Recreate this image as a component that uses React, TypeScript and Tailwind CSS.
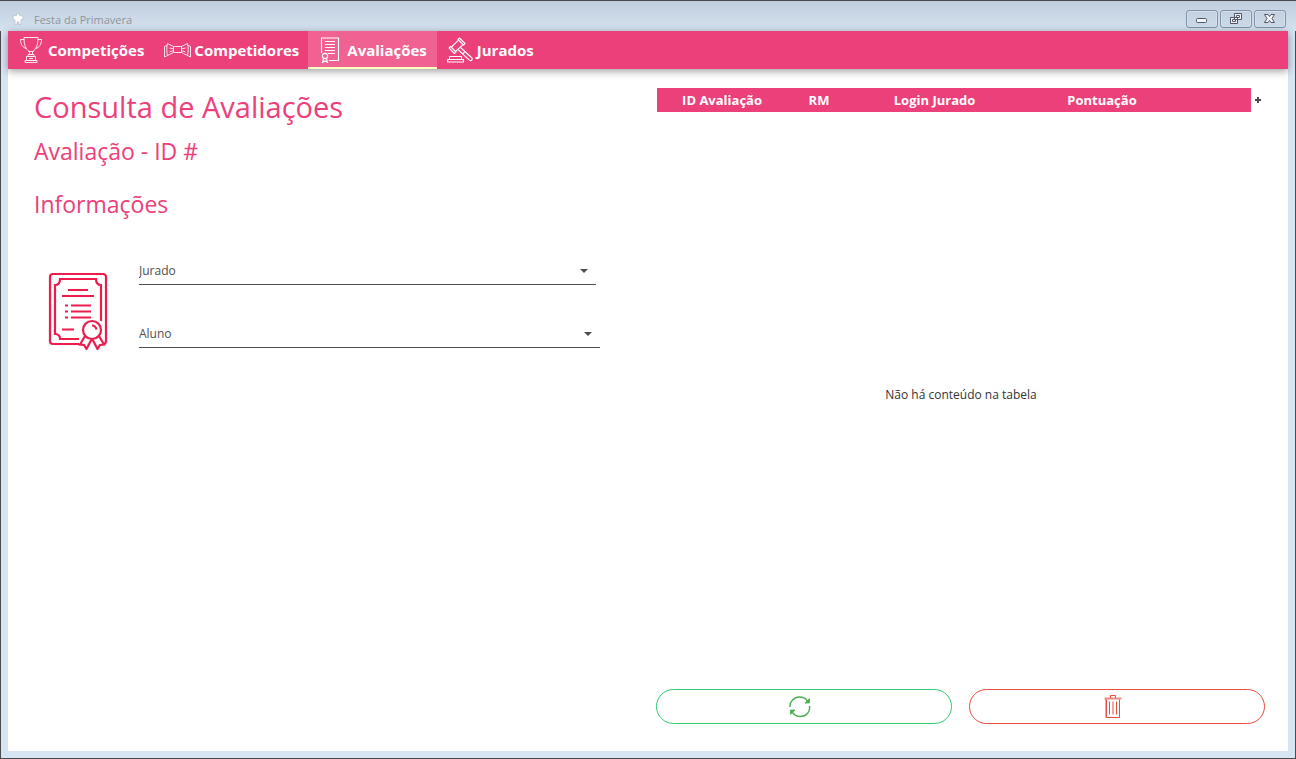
import type { ReactNode } from "react";

const textFont = "font-['Open_Sans','Noto_Sans',sans-serif]";

function TrophyIcon() {
  return (
    <svg width="24" height="28" viewBox="0 0 24 28" fill="none" stroke="#fff" strokeOpacity="0.85" aria-hidden="true">
      <path d="M5 1.500h14c0 7-1.500 12-5.500 14v3h-3v-3C6.500 13.500 5 8.500 5 1.500z" />
      <path d="M5 3.500H1.500c0 5 2.500 8 5.500 9M19 3.500h3.500c0 5-2.500 8-5.500 9" />
      <path d="M9.500 15.500h5M9 18.500h6v2H9zM7.500 20.500h9v4h-9zM6 24.500h12v2H6zM10 22.500h4" />
    </svg>
  );
}

function BowTieIcon() {
  return (
    <svg width="27" height="16" viewBox="0 0 27 16" fill="none" stroke="#fff" strokeOpacity="0.85" strokeLinejoin="round" aria-hidden="true">
      <path d="M9.500 4.500h8v6h-8zM9.500 4.500L3.500 1.500c-1 4-1 8 0 12l6-3M17.500 4.500l6-3c1 4 1 8 0 12l-6-3" />
      <path d="M3 3.500L.5 4.500v10.500l3-1.500M24 3.500l2.500 1v10.500l-3-1.500M5.500 6l4 .8M5.500 10l4-1.500M21.500 6l-4 .8M21.500 10l-4-1.500" />
    </svg>
  );
}

function SheetIcon() {
  return (
    <svg width="20" height="26" viewBox="0 0 20 26" fill="none" stroke="#fff" strokeWidth="1.1" aria-hidden="true">
      <path d="M1.500 16V1h17v22.500H9" />
      <path d="M5 4.500h10M5 7.500h10M5 10.500h10M5 13.500h10M8 16.500h7" />
      <circle cx="5" cy="19" r="2.600" />
      <path d="M3.500 21.500L2.500 25.500 5 24l2.500 1.500-1-4" />
    </svg>
  );
}

function GavelIcon() {
  return (
    <svg width="26" height="26" viewBox="0 0 26 26" fill="none" stroke="#fff" strokeWidth="1.100" strokeLinejoin="round" aria-hidden="true">
      <path d="M12.500 1L18 6.500 16.500 8 11 2.500zM3.500 9.500L9 15l-1.500 1.500L2 11zM11.500 3.200L4.500 10M16 7.700L8.500 14.500" />
      <path d="M13.500 10.500l11 10c1 1 .8 2 .2 2.600-.7.700-1.700.700-2.600-.2L11 12.500M18 14.500l-2.500 2.500" />
      <path d="M2.500 22.500v-3h12v3M.6 22.500h15.900v2.500H.6z" />
    </svg>
  );
}

function CertificateIcon() {
  return (
    <svg className="shrink-0" width="60" height="78" viewBox="0 0 60 78" fill="none" stroke="#ed1c4d" strokeWidth="2.200" aria-hidden="true">
      <path d="M31 72H5a3 3 0 0 1-3-3V5a3 3 0 0 1 3-3h50a3 3 0 0 1 3 3v64a3 3 0 0 1-3 3" />
      <path d="M31 67H12c0-3-2-5-5-5V13c3 0 5-2 5-6h36c0 4 2 6 5 6v36" />
      <path d="M20 18h20M14 24h32M23 33.500h20M23 39.500h20M23 45.500h20M17 33.500h3M17 39.500h3M17 45.500h3M14 57.500h12" />
      <circle cx="44" cy="58" r="9" />
      <path d="M44 53.500c2.500 0 4 2 4.500 4" />
      <path d="M37 64l-5 8.500 4 .5 2.500 4 5-9.500M51 64l5 8.500-4 .5-2.500 4-5-9.500" />
    </svg>
  );
}

function RefreshIcon() {
  return (
    <svg width="22" height="22" viewBox="0 0 22 22" fill="none" stroke="#4caf50" strokeWidth="1.400" aria-hidden="true">
      <path d="M1 11C.5 5.500 5 1 10.500 1c3.500 0 6.500 1.500 8.500 4.500M20.500 10c1 6-3.500 10.500-9 10.500-3.500 0-6.500-1.500-8.500-4.500" />
      <path d="M20.500 2.500v4.500H16zM1.500 18.500V14H6z" fill="#4caf50" strokeWidth="0.800" />
    </svg>
  );
}

function TrashIcon() {
  return (
    <svg width="18" height="24" viewBox="0 0 18 24" fill="none" stroke="#e74c3c" aria-hidden="true">
      <path d="M6.500 3V.5h5V3M2.500 4.500v18h13v-18M5.500 6.500v13M9 6.500v13M12.500 6.500v13" />
      <path d="M.5 3.500h17" strokeWidth="2" opacity="0.650" />
      <path d="M1.500 4v18.500" opacity="0.500" />
    </svg>
  );
}

function WindowButton({ label, children }: { label: string; children: ReactNode }) {
  return (
    <button
      type="button"
      aria-label={label}
      className="flex h-[18px] w-8 items-center justify-center rounded-[3px] border border-[#8391ab] bg-linear-to-b from-[#c3d0df] to-[#cddbe9] shadow-[inset_0_0_0_1px_#d5e0ec]"
    >
      <svg width="14" height="12" viewBox="0 0 14 12" fill="#f4f4f4" stroke="#50566a" aria-hidden="true">
        {children}
      </svg>
    </button>
  );
}

function Tab({ icon, label, spacing, active = false }: { icon: ReactNode; label: string; spacing: string; active?: boolean }) {
  return (
    <a
      href="#"
      aria-current={active ? "page" : undefined}
      className={`flex items-center border-b-2 pt-0.5 text-[15px] font-bold text-white ${spacing} ${
        active ? "border-[#ffffbf] bg-[#f06292]" : "border-transparent"
      }`}
    >
      {icon}
      <span>{label}</span>
    </a>
  );
}

function Field({ id, label, margin }: { id: string; label: string; margin: string }) {
  return (
    <div className={`relative ${margin}`}>
      <select
        id={id}
        aria-label={label}
        defaultValue=""
        className="block h-7 w-full appearance-none border-b border-[#4d4d4d] bg-transparent text-xs text-[#4d4d4d]"
      >
        <option value="">{label}</option>
      </select>
      <svg className="pointer-events-none absolute top-3 right-2" width="8" height="4" viewBox="0 0 8 4" fill="#4d4d4d" aria-hidden="true">
        <path d="M0 0h8L4 4z" />
      </svg>
    </div>
  );
}

export default function App() {
  return (
    <div className={`flex min-h-screen flex-col border border-[#4a4a4f] bg-[#d7e4f2] ${textFont}`}>
      <header className="-mx-px flex h-[30px] items-center bg-linear-to-b from-[#bfcddd] to-[#d5e3f0] pt-1.5 pr-[10px] pl-3">
        <svg width="12" height="12" viewBox="0 0 12 12" fill="#fff" stroke="#a9b4c0" strokeWidth="0.600" aria-hidden="true">
          <path d="M4.500 2.500V.8h3v1.700l3.500.5v3l-2 1v4.500H7V9H5v2.500H3V7L1 6V3z" />
        </svg>
        <span className="ml-[10px] pt-0.5 text-[11px] text-[#919499]">Festa da Primavera</span>
        <div className="ml-auto flex gap-[2px]">
          <WindowButton label="Minimizar">
            <rect x="1.500" y="5.500" width="10" height="4" rx="1" />
          </WindowButton>
          <WindowButton label="Restaurar">
            <path d="M5.500.5h7v6h-7zM7.500 2.500h3v2h-3zM1.500 4.500h7v6h-7zM3.500 6.500h3v2h-3z" />
          </WindowButton>
          <WindowButton label="Fechar">
            <path d="M1.500 1.500h3.500l1.500 2 1.500-2h3.500L9 5.500l2.500 4H8l-1.500-2-1.500 2H1.500l2.500-4z" />
          </WindowButton>
        </div>
      </header>

      <div className="mx-[7px] mb-[7px] flex grow flex-col bg-white">
        <nav className="flex h-[38px] bg-[#ec407a] shadow-[0_2px_8px_rgba(0,0,0,0.4)]">
          <Tab spacing="gap-[5px] pr-[10px] pl-[11px]" icon={<TrophyIcon />} label="Competições" />
          <Tab spacing="gap-[3px] pr-[9px] pl-[10px]" icon={<BowTieIcon />} label="Competidores" />
          <Tab spacing="gap-[7px] pr-[10px] pl-3" icon={<SheetIcon />} label="Avaliações" active />
          <Tab spacing="gap-1 px-[10px]" icon={<GavelIcon />} label="Jurados" />
        </nav>

        <main className="grid grow grid-cols-2">
          <section className="pt-[18px] pl-[26px]">
            <div className="text-[#ec407a]">
              <h1 className="text-[29px] leading-10">Consulta de Avaliações</h1>
              <h2 className="mt-1 text-[23px] leading-10">Avaliação - ID #</h2>
              <h2 className="mt-[13px] text-[23px] leading-10">Informações</h2>
            </div>
            <div className="mt-[33px] flex pl-[14px]">
              <div className="pt-[15px]">
                <CertificateIcon />
              </div>
              <div className="ml-[31px] flex grow flex-col gap-[35px]">
                <Field id="jurado" label="Jurado" margin="mr-[52px]" />
                <Field id="aluno" label="Aluno" margin="mr-12" />
              </div>
            </div>
          </section>

          <section className="flex flex-col pt-[19px] pr-[23px] pb-[27px] pl-2">
            <div className="flex grow flex-col pl-px">
              <table className="w-full table-fixed">
                <thead>
                  <tr className="h-6 bg-[#ec407a] text-[13px] leading-5 text-white">
                    <th className="w-[21.4%]">ID Avaliação</th>
                    <th className="w-[10.5%]">RM</th>
                    <th className="w-[27.5%]">Login Jurado</th>
                    <th className="w-[27.6%]">Pontuação</th>
                    <td />
                    <td className="w-[14px] bg-white text-center align-middle">
                      <button type="button" aria-label="Colunas" className="block h-[22px] w-full">
                        <svg className="mx-auto" width="6" height="6" viewBox="0 0 6 6" fill="#4d4d4d" aria-hidden="true">
                          <path d="M2 0h2v2h2v2H4v2H2V4H0V2h2z" />
                        </svg>
                      </button>
                    </td>
                  </tr>
                </thead>
              </table>
              <p className="flex grow items-center justify-center text-xs text-[#333]">Não há conteúdo na tabela</p>
            </div>
            <div className="mt-3 flex gap-[17px]">
              <button type="button" aria-label="Atualizar" className="flex h-[35px] flex-1 items-center justify-center rounded-full border border-[#2ecc71] pr-2">
                <RefreshIcon />
              </button>
              <button type="button" aria-label="Excluir" className="flex h-[35px] flex-1 items-center justify-center rounded-full border border-[#e74c3c] pr-2">
                <TrashIcon />
              </button>
            </div>
          </section>
        </main>
      </div>
    </div>
  );
}
